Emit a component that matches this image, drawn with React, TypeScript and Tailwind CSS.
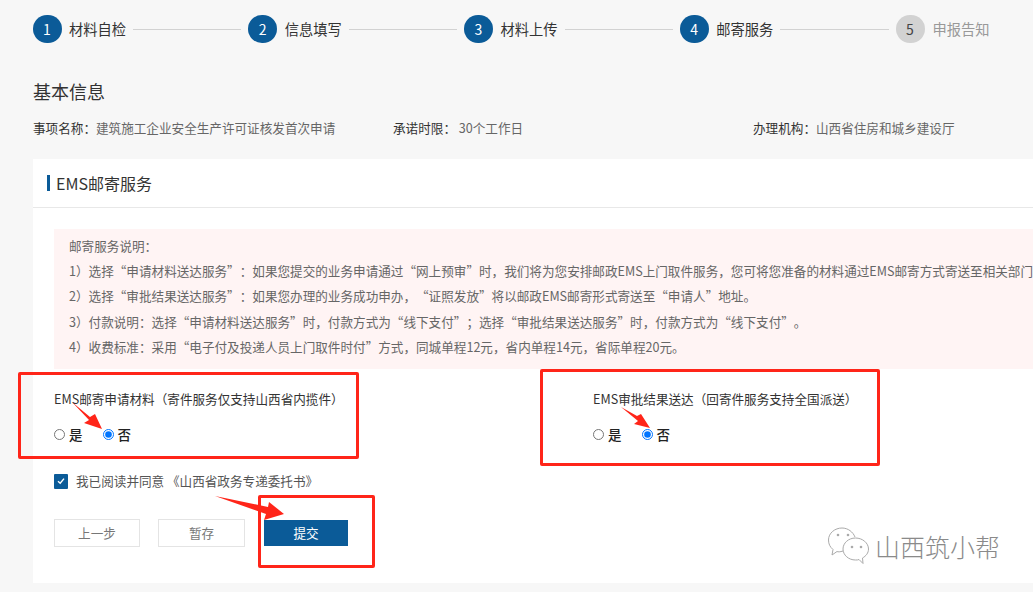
const steps = [
  { n: "1", label: "材料自检" },
  { n: "2", label: "信息填写" },
  { n: "3", label: "材料上传" },
  { n: "4", label: "邮寄服务" },
];

const notes = [
  "邮寄服务说明：",
  "1）选择“申请材料送达服务”：如果您提交的业务申请通过“网上预审”时，我们将为您安排邮政EMS上门取件服务，您可将您准备的材料通过EMS邮寄方式寄送至相关部门",
  "2）选择“审批结果送达服务”：如果您办理的业务成功申办，“证照发放”将以邮政EMS邮寄形式寄送至“申请人”地址。",
  "3）付款说明：选择“申请材料送达服务”时，付款方式为“线下支付”；选择“审批结果送达服务”时，付款方式为“线下支付”。",
  "4）收费标准：采用“电子付及投递人员上门取件时付”方式，同城单程12元，省内单程14元，省际单程20元。",
];

function YesNo({ name, gap }: { name: string; gap: string }) {
  return (
    <div className="mt-[15px] flex h-[20px] items-center text-[13.5px] font-medium text-[#222]">
      <input type="radio" name={name} className="h-[11px] w-[11px]" />
      <span className={"ml-[4px] " + gap}>是</span>
      <input type="radio" name={name} defaultChecked className="h-[11px] w-[11px]" />
      <span className="ml-[4px]">否</span>
    </div>
  );
}

export default function App() {
  return (
    <div
      lang="zh-CN"
      className="relative h-[592px] w-[1033px] overflow-hidden bg-[#f7f7f7] pl-[33px] pt-[15px] font-['Noto_Sans_CJK_SC','Liberation_Sans',sans-serif] text-[12.6px] text-[#333] [text-spacing-trim:space-all]"
    >
      <div className="ml-[-0.5px] flex h-[28px] items-center">
        {steps.map((s) => (
          <div key={s.n} className="flex w-[215.75px] shrink-0 items-center">
            <span className="flex h-[28px] w-[29px] shrink-0 items-center justify-center rounded-full bg-[#0b5b98] text-[14px] text-white">
              {s.n}
            </span>
            <span className="ml-[7.5px] shrink-0 text-[14.25px] text-[#333]">{s.label}</span>
            <span className="ml-[7px] mr-[7px] h-px flex-1 bg-[#d2d2d2]" />
          </div>
        ))}
        <div className="flex shrink-0 items-center">
          <span className="flex h-[28px] w-[29px] items-center justify-center rounded-full bg-[#d2d2d2] text-[14px] text-[#444]">
            5
          </span>
          <span className="ml-[8px] text-[14.25px] text-[#999]">申报告知</span>
        </div>
      </div>

      <h1 className="mt-[35px] h-[26px] text-[18px] font-normal leading-[26px] text-[#333]">基本信息</h1>

      <div className="mt-[14px] flex h-[20px] items-center leading-[20px]">
        <div className="w-[360px] shrink-0">
          事项名称：<span className="text-[#666]">建筑施工企业安全生产许可证核发首次申请</span>
        </div>
        <div className="w-[360px] shrink-0">
          承诺时限： <span className="text-[#666]">30个工作日</span>
        </div>
        <div className="shrink-0">
          办理机构：<span className="text-[#666]">山西省住房和城乡建设厅</span>
        </div>
      </div>

      <div className="mt-[21px] h-[424px] w-[1000px] bg-white">
        <div className="flex h-[49px] items-center border-b border-[#e8e8e8] pl-[14px]">
          <span className="h-[16px] w-[3px] bg-[#0b5b98]" />
          <span className="ml-[6px] text-[16px] text-[#333]">EMS邮寄服务</span>
        </div>

        <div className="pl-[21px]">
          <div className="mt-[21px] h-[140px] overflow-hidden bg-[#fff4f4] pl-[15px] pt-[4px] text-[#666]">
            {notes.map((n) => (
              <p key={n} className="h-[25.2px] whitespace-nowrap leading-[25px]">
                {n}
              </p>
            ))}
          </div>

          <div className="mt-[20px] grid grid-cols-[539px_1fr]">
            <div>
              <div className="h-[20px] leading-[20px]">EMS邮寄申请材料（寄件服务仅支持山西省内揽件）</div>
              <YesNo name="material" gap="mr-[20px]" />
            </div>
            <div>
              <div className="h-[20px] leading-[20px]">EMS审批结果送达（回寄件服务支持全国派送）</div>
              <YesNo name="result" gap="mr-[20px]" />
            </div>
          </div>

          <div className="mt-[27px] flex h-[20px] items-center">
            <span className="flex h-[15px] w-[14px] items-center justify-center rounded-[1px] bg-[#0b5b98]">
              <svg width="10" height="10" viewBox="0 0 10 10" fill="none">
                <path d="M2 5.2 L4.2 7.2 L8 2.6" stroke="#fff" strokeWidth="1.4" />
              </svg>
            </span>
            <span className="ml-[8px] text-[#555]">我已阅读并同意 《山西省政务专递委托书》</span>
          </div>

          <div className="mt-[28px] flex items-center">
            <button className="h-[28px] w-[86px] border border-[#e4e4e4] bg-white text-[#777]">上一步</button>
            <button className="ml-[18px] h-[28px] w-[87px] border border-[#e4e4e4] bg-white text-[#777]">暂存</button>
            <button className="ml-[19px] h-[26px] w-[84px] bg-[#0b5b98] text-white">提交</button>
          </div>
        </div>
      </div>

      {/* annotations drawn on top of the screenshot */}
      <div className="absolute left-[18px] top-[372px] h-[87px] w-[341px] rounded-[2px] border-[3px] border-[#ff2519]" />
      <div className="absolute left-[540px] top-[369px] h-[97px] w-[340px] rounded-[2px] border-[3px] border-[#ff2519]" />
      <div className="absolute left-[258px] top-[495px] h-[73px] w-[117px] rounded-[2px] border-[3px] border-[#ff2519]" />

      <svg className="absolute left-0 top-0" width="1033" height="592" fill="#ff2519">
        <polygon points="72,402 90,417 95,414 102,429 84,423 89,420" />
        <polygon points="621,407 637,416 641,414 650,428 634,424 638,421" />
        <polygon points="215,496 268,507 269,502 284,514 264,520 266,514" />
      </svg>

      <div className="absolute left-[828px] top-[527px] flex items-center">
        <svg width="42" height="38" viewBox="0 0 42 38" fill="none" stroke="#aaaaaa" strokeWidth="1">
          <path d="M15 24 C12 25 10 25 9 24.500 L4 28 L5 22.500 C2 20 0.500 17 0.500 13 C0.500 6 7 1 14 1 C20 1 25 5 27 10" />
          <path d="M27.500 11 C20.500 11 15 16 15 22 C15 28 20.500 33 27.500 33 C29 33 30 33 31 32.500 L35 36.500 L34.500 31 C38 29 40.500 26 40.500 22 C40.500 16 34.500 11 27.500 11 Z" />
          <circle cx="10" cy="8" r="1.300" fill="#aaaaaa" stroke="none" />
          <circle cx="20" cy="8" r="1.300" fill="#aaaaaa" stroke="none" />
          <circle cx="24" cy="20" r="1.300" fill="#aaaaaa" stroke="none" />
          <circle cx="33" cy="20" r="1.300" fill="#aaaaaa" stroke="none" />
        </svg>
        <span className="ml-[5px] text-[25px] font-light leading-[30px] text-[#8a8a8a]">山西筑小帮</span>
      </div>
    </div>
  );
}
